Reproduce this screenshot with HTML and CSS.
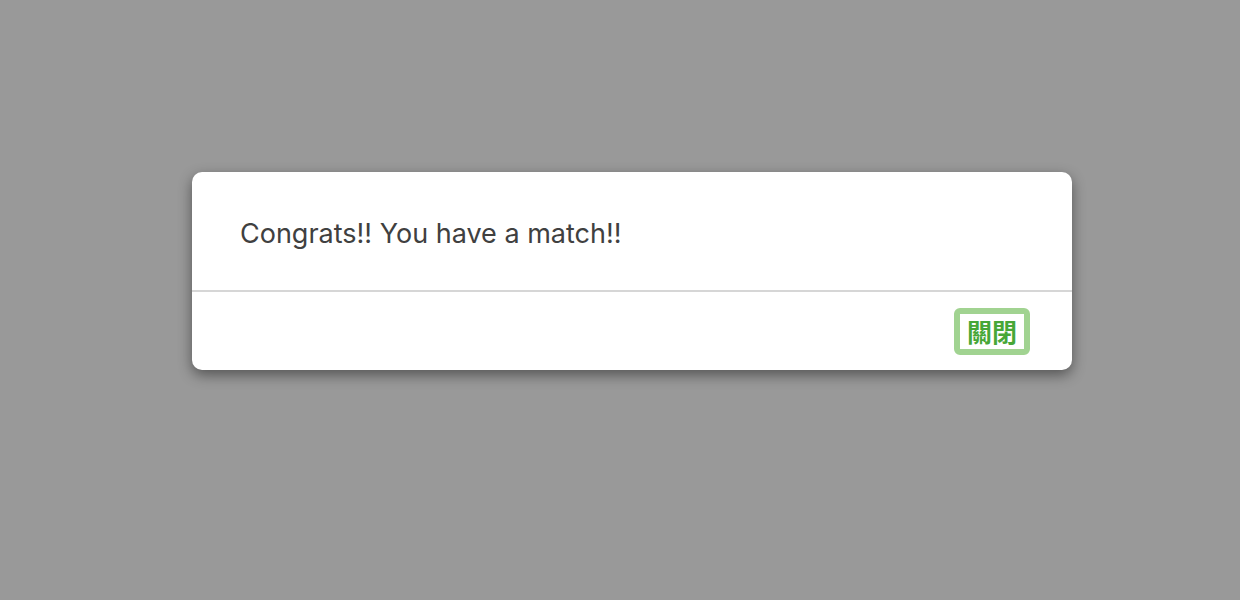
FILE: index.html
```html
<!DOCTYPE html>
<html>
<head>
<meta charset="utf-8">
<link rel="stylesheet" href="styles.css">
</head>
<body>
<div class="overlay">
  <div class="dialog">
    <div class="dialog-body">
      <p class="message">Congrats!! You have a match!!</p>
    </div>
    <div class="dialog-footer">
      <button class="close-btn">關閉</button>
    </div>
  </div>
</div>
</body>
</html>
```
FILE: styles.css
```css
html, body {
  margin: 0;
  padding: 0;
  height: 100%;
  background: #999999;
}
.overlay {
  padding: 172px 0 0 192px;
  font-family: Inter, "Noto Sans CJK TC", sans-serif;
}
.dialog {
  width: 880px;
  background: #ffffff;
  border-radius: 10px;
  box-shadow: 0 5px 14px rgba(0, 0, 0, 0.45);
  overflow: hidden;
}
.dialog-body {
  padding: 43px 48px 37px;
  border-bottom: 2px solid #d6d6d6;
}
.message {
  margin: 0;
  font-size: 27px;
  line-height: 38px;
  color: #404040;
}
.dialog-footer {
  height: 78px;
  display: flex;
  align-items: center;
  justify-content: flex-end;
  padding-right: 42px;
}
.close-btn {
  box-sizing: border-box;
  width: 76px;
  height: 47px;
  border: 6px solid #a1d391;
  border-radius: 6px;
  background: #ffffff;
  color: #47a737;
  font-family: "Noto Sans CJK TC", sans-serif;
  font-weight: 700;
  font-size: 25px;
  line-height: 33px;
  padding: 0;
  margin-top: 1px;
  cursor: pointer;
}
```
